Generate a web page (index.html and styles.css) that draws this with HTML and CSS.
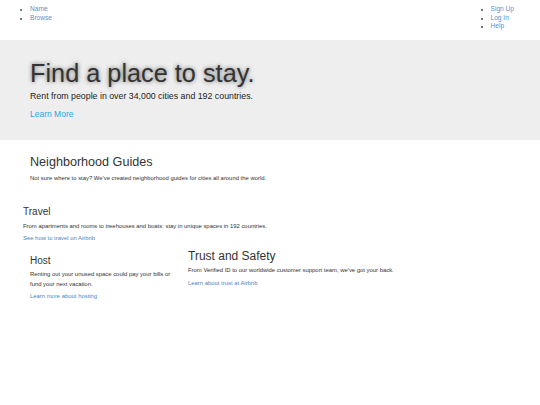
FILE: index.html
```html
<!DOCTYPE html>
<html>
<head>
<meta charset="utf-8">
<link rel="stylesheet" href="styles.css">
</head>
<body>
<nav class="nav">
  <ul class="nav-list">
    <li><a href="#">Name</a></li>
    <li><a href="#">Browse</a></li>
  </ul>
  <ul class="nav-list nav-right">
    <li><a href="#">Sign Up</a></li>
    <li><a href="#">Log In</a></li>
    <li><a href="#">Help</a></li>
  </ul>
</nav>
<header class="hero">
  <h1 class="hero-title">Find a place to stay.</h1>
  <p class="hero-sub">Rent from people in over 34,000 cities and 192 countries.</p>
  <a class="hero-link" href="#">Learn More</a>
</header>
<section class="guides">
  <h2 class="guides-title">Neighborhood Guides</h2>
  <p class="small">Not sure where to stay? We've created neighborhood guides for cities all around the world.</p>
</section>
<section class="travel">
  <h3 class="travel-title">Travel</h3>
  <p class="small">From apartments and rooms to treehouses and boats: stay in unique spaces in 192 countries.</p>
  <a class="small-link" href="#">See how to travel on Airbnb</a>
</section>
<div class="row">
  <section class="host">
    <h3 class="host-title">Host</h3>
    <p class="small host-text">Renting out your unused space could pay your bills or fund your next vacation.</p>
    <a class="small-link host-link" href="#">Learn more about hosting</a>
  </section>
  <section class="trust">
    <h3 class="trust-title">Trust and Safety</h3>
    <p class="small">From Verified ID to our worldwide customer support team, we've got your back.</p>
    <a class="small-link" href="#">Learn about trust at Airbnb</a>
  </section>
</div>
</body>
</html>
```
FILE: styles.css
```css
* { box-sizing: border-box; }
html, body { margin: 0; padding: 0; background: #fff; }
body {
  font-family: "Liberation Sans", Arial, sans-serif;
  color: #333;
  width: 540px;
  height: 405px;
  overflow: hidden;
}
a { text-decoration: none; }

.nav {
  display: flex;
  justify-content: space-between;
  height: 40px;
}
.nav-list {
  margin: 0;
  padding: 5px 0 0 30px;
  list-style: square;
  font-size: 6.6px;
  line-height: 8.5px;
}
.nav-list li::marker { color: #777; font-size: 5px; }
.nav-right { padding-right: 26px; }
.nav-list a { color: #5a93cc; }

.hero {
  background: #eeeeee;
  height: 100px;
  padding: 18px 30px 0;
}
.hero-title {
  margin: 0;
  font-size: 25.3px;
  line-height: 30px;
  font-weight: normal;
  color: #333;
  text-shadow: 0 0 4px rgba(0, 0, 0, 0.55);
}
.hero-sub {
  margin: 2px 0 0;
  font-size: 8.8px;
  line-height: 12px;
  color: #222;
}
.hero-link {
  display: block;
  margin-top: 6px;
  font-size: 8.5px;
  line-height: 12px;
  color: #2aa9e0;
}

.small {
  margin: 0;
  font-size: 5.9px;
  line-height: 8px;
  color: #333;
}
.small-link {
  display: block;
  font-size: 5.9px;
  line-height: 8px;
  color: #4a86c5;
}

.guides { padding: 14.5px 30px 0; }
.guides-title {
  margin: 0 0 4.5px;
  font-size: 12.6px;
  line-height: 15px;
  font-weight: normal;
}

.travel { padding: 23px 23px 0; }
.travel-title {
  margin: 0 0 3.5px;
  font-size: 10px;
  line-height: 13px;
  font-weight: normal;
}
.travel .small-link { margin-top: 4.5px; }

.row {
  display: flex;
  padding-left: 30px;
  align-items: flex-start;
}
.host { width: 158px; padding-top: 11.5px; }
.host-title {
  margin: 0 0 2.5px;
  font-size: 10px;
  line-height: 13px;
  font-weight: normal;
}
.host-text { width: 148px; line-height: 10px; }
.host-link { margin-top: 3px; }

.trust { padding-top: 7px; }
.trust-title {
  margin: 0 0 3px;
  font-size: 12px;
  line-height: 14px;
  font-weight: normal;
}
.trust .small-link { margin-top: 5px; }
```
